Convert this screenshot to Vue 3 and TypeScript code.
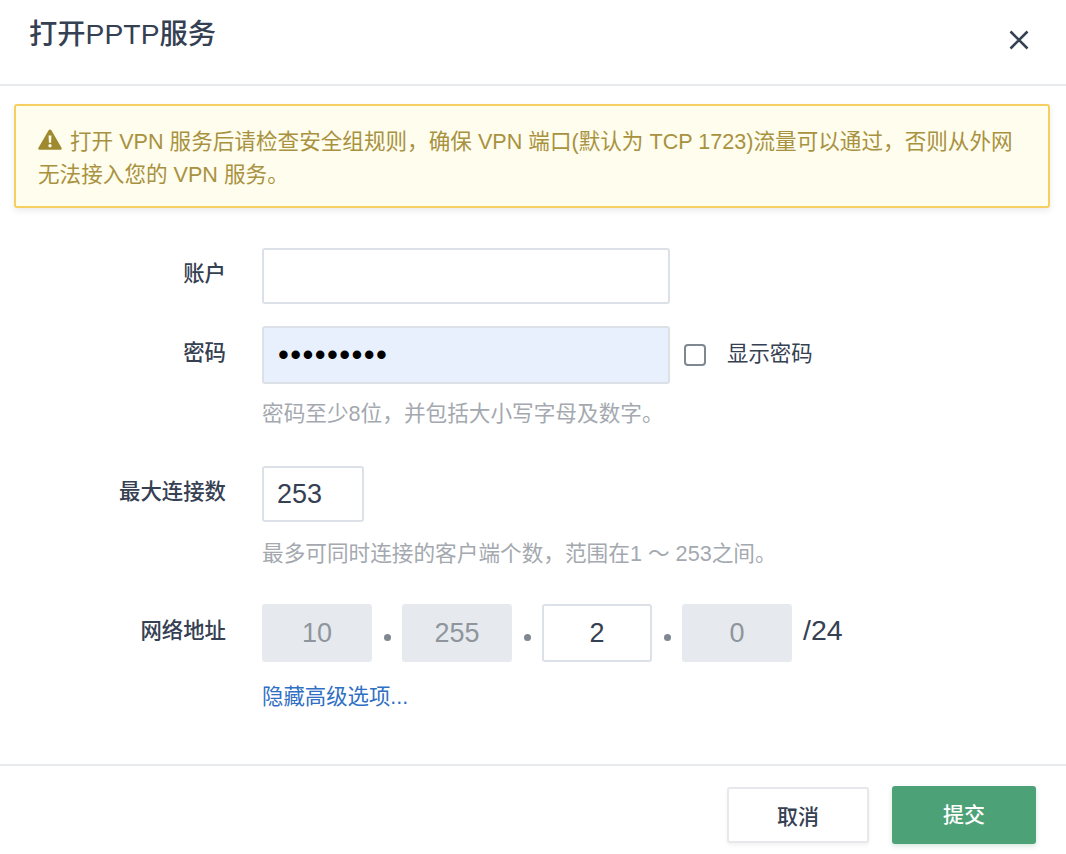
<script setup lang="ts">
import { ref } from 'vue'

const ipParts = ref([
  { value: '10', disabled: true },
  { value: '255', disabled: true },
  { value: '2', disabled: false },
  { value: '0', disabled: true },
])
</script>

<template>
  <div class="dialog">
    <header class="head">
      <h1 class="title">打开PPTP服务</h1>
      <svg class="close" width="22" height="22" viewBox="0 0 22 22" aria-hidden="true">
        <path d="M2.5 2.5 L19.5 19.5 M19.5 2.5 L2.5 19.5" />
      </svg>
    </header>

    <div class="body">
      <div class="alert">
        <svg class="warn" width="24" height="21" viewBox="0 0 24 21" aria-hidden="true">
          <path fill-rule="evenodd" d="M12 0.4c.6 0 1.1.3 1.4.8l10.1 17.6c.6 1-.1 2-1.3 2H1.8c-1.2 0-1.9-1-1.3-2L10.6 1.2c.3-.5.8-.8 1.4-.8zM10.6 6.6l.3 7.2h2.2l.3-7.2h-2.8zM12 15.1a1.7 1.7 0 1 0 0 3.4 1.7 1.7 0 0 0 0-3.4z" />
        </svg>
        打开 VPN 服务后请检查安全组规则，确保 VPN 端口(默认为 TCP 1723)流量可以通过，否则从外网无法接入您的 VPN 服务。
      </div>

      <div class="row row-account">
        <label class="label">账户</label>
        <input class="input wide" type="text" />
      </div>

      <div class="row row-password">
        <label class="label">密码</label>
        <input class="input wide filled" type="password" value="123456789" readonly />
        <span class="check"></span>
        <span class="check-text">显示密码</span>
      </div>
      <p class="hint hint-password">密码至少8位，并包括大小写字母及数字。</p>

      <div class="row row-max">
        <label class="label">最大连接数</label>
        <input class="input narrow" type="text" value="253" readonly />
      </div>
      <p class="hint hint-max">最多可同时连接的客户端个数，范围在1 ～ 253之间。</p>

      <div class="row row-net">
        <label class="label">网络地址</label>
        <div class="ip">
          <template v-for="(part, i) in ipParts" :key="i">
            <span v-if="i > 0" class="dot"></span>
            <input class="input octet" :class="{ off: part.disabled }" type="text" :value="part.value" readonly />
          </template>
          <span class="mask">/24</span>
        </div>
      </div>
      <a class="link">隐藏高级选项...</a>
    </div>

    <footer class="foot">
      <button class="btn plain" type="button">取消</button>
      <button class="btn primary" type="button">提交</button>
    </footer>
  </div>
</template>

<style>
html, body { margin: 0; background: #fff; }
</style>

<style scoped>
.dialog {
  width: 1066px;
  height: 854px;
  overflow: hidden;
  background: #fff;
  color: #354052;
  font-family: "Liberation Sans", "Noto Sans CJK SC", sans-serif;
  font-size: 21px;
}
.head {
  height: 84px;
  border-bottom: 2px solid #e8ebee;
  display: flex;
  justify-content: space-between;
  align-items: flex-start;
  padding: 0 36px 0 29px;
}
.title {
  margin: 15px 0 0;
  font-size: 28.3px;
  line-height: 38px;
  font-weight: 500;
  color: #354052;
}
.close { margin-top: 29px; }
.close path { fill: none; stroke: #354052; stroke-width: 2.6; }
.body { padding: 18px 16px 0 14px; }
.alert {
  box-sizing: border-box;
  height: 104px;
  padding: 19px 22px 0;
  border: 2px solid #f5cf60;
  border-radius: 3px;
  background: #fffdee;
  box-shadow: 0 3px 6px rgba(0, 0, 0, 0.08);
  color: #a8923f;
  font-size: 21.6px;
  line-height: 33px;
}
.warn { vertical-align: -1px; fill: #a08a30; margin-right: 2px; }
.row { display: flex; align-items: center; }
.row-account { margin-top: 40px; }
.row-password { margin-top: 22px; }
.row-max { margin-top: 37px; }
.row-net { margin-top: 0; }
.label {
  width: 212px;
  margin: -4px 36px 0 0;
  flex: none;
  text-align: right;
  font-size: 21.4px;
  font-weight: 500;
  line-height: 30px;
  color: #354052;
}
.input {
  box-sizing: border-box;
  border: 2px solid #dce1e8;
  border-radius: 3px;
  background: #fff;
  color: #354052;
  font: inherit;
  font-size: 27px;
  outline: none;
  margin: 0;
}
.wide { width: 408px; height: 56px; padding: 0 14px; }
.filled {
  height: 58px;
  background: #e8f0fd;
  color: #000;
  font-size: 31px;
  letter-spacing: 1.4px;
}
.narrow { width: 102px; height: 56px; padding: 0 13px; }
.check {
  box-sizing: border-box;
  width: 22px;
  height: 22px;
  margin-left: 14px;
  border: 2px solid #7f8791;
  border-radius: 4px;
  background: #fff;
}
.check-text { margin: 0 0 8px 21px; font-size: 21.4px; color: #354052; }
.hint {
  margin: 0 0 0 248px;
  color: #a4a9af;
  font-size: 21.65px;
  line-height: 30px;
}
.hint-password { margin-top: 15px; }
.hint-max { margin-top: 17px; margin-bottom: 35px; }
.ip { display: flex; align-items: center; }
.octet { width: 110px; height: 58px; padding: 0; text-align: center; }
.off { background: #e6eaee; border-color: #e6eaee; color: #8f959c; }
.dot {
  width: 7px;
  height: 7px;
  margin: 8px 11.5px 0;
  border-radius: 50%;
  background: #7f8791;
}
.mask { margin: -6px 0 0 11px; font-size: 28.5px; color: #354052; }
.link {
  display: block;
  margin: 20px 0 0 248px;
  color: #2f6fc4;
  font-size: 21.4px;
  line-height: 30px;
}
.foot {
  position: absolute;
  top: 764px;
  left: 0;
  box-sizing: border-box;
  width: 1066px;
  height: 90px;
  padding: 20px 30px 0 0;
  border-top: 2px solid #e8ebee;
  display: flex;
  justify-content: flex-end;
  align-items: flex-start;
  gap: 23px;
}
.btn {
  box-sizing: border-box;
  border-radius: 3px;
  font: inherit;
  font-size: 21px;
  font-weight: 500;
}
.plain {
  width: 142px;
  height: 56px;
  margin-top: 1px;
  background: #fff;
  border: 2px solid #e6e8ec;
  color: #354052;
  box-shadow: 0 2px 4px rgba(0, 0, 0, 0.06);
}
.primary {
  width: 144px;
  height: 58px;
  padding-bottom: 5px;
  background: #4da177;
  border: 0;
  color: #fff;
  box-shadow: 0 2px 5px rgba(77, 161, 119, 0.25);
}
</style>
